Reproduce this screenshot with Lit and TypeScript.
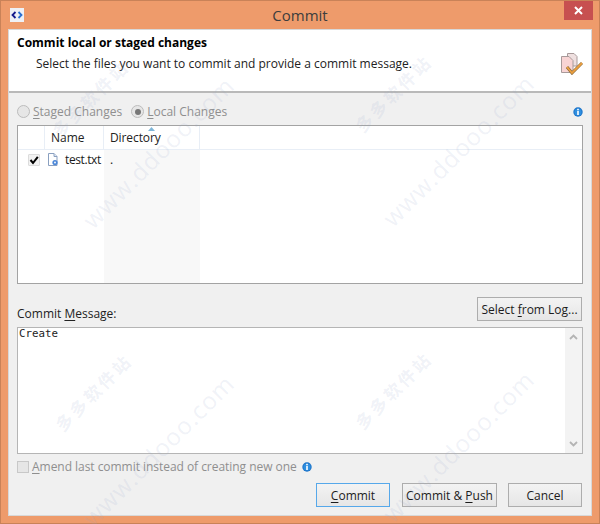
import { LitElement, html, css } from "lit";
import { customElement } from "lit/decorators.js";

const infoIcon = html`<svg class="info" viewBox="0 0 10 10"><circle cx="5" cy="5" r="4.7" fill="#1c74c9"/><circle cx="5" cy="5" r="3.6" fill="#2f8fe0"/><rect x="4.2" y="1.8" width="1.6" height="1.5" fill="#fff"/><rect x="4.2" y="4" width="1.6" height="4" fill="#fff"/></svg>`;

const marks: [string, number, number, boolean][] = [
  ["多多软件站", 90, 98, true],
  ["www.ddooo.com", 158, 152, false],
  ["多多软件站", 393, 93, true],
  ["www.ddooo.com", 458, 150, false],
  ["多多软件站", 93, 392, true],
  ["www.ddooo.com", 158, 450, false],
  ["多多软件站", 393, 390, true],
  ["www.ddooo.com", 458, 446, false],
];

@customElement("app-root")
export class AppRoot extends LitElement {
  static styles = css`
    :host {
      display: block;
      position: relative;
      width: 600px;
      height: 524px;
      overflow: hidden;
      font-family: "Open Sans", "Noto Sans", sans-serif;
      font-size: 12px;
      color: #1a1a1a;
    }
    .window {
      position: relative;
      box-sizing: border-box;
      width: 600px;
      height: 524px;
      background: #ee9b6b;
      border: 1px solid #c98258;
      display: flex;
      flex-direction: column;
      padding: 0 7px 7px;
    }
    .titlebar {
      height: 28px;
      flex: none;
      display: flex;
      align-items: center;
      justify-content: center;
      font-size: 15px;
      color: #3d3d3d;
    }
    .app-icon {
      position: absolute;
      left: 9px;
      top: 7px;
      width: 14px;
      height: 14px;
    }
    .close {
      position: absolute;
      right: 6px;
      top: 0;
      width: 29px;
      height: 19px;
      background: #c75050;
      display: flex;
      align-items: center;
      justify-content: center;
    }
    .close svg { width: 9px; height: 9px; }
    .client {
      flex: 1;
      display: flex;
      flex-direction: column;
      background: #f0f0f0;
      border: 1px solid #d8d8d8;
      min-height: 0;
    }
    .header {
      flex: none;
      box-sizing: border-box;
      height: 63px;
      background: #fff;
      border-bottom: 2px solid #b9b9b9;
      padding: 5px 8px 0;
      display: grid;
      grid-template-columns: 1fr 22px;
      grid-template-rows: 16px 24px;
      row-gap: 1px;
      column-gap: 7px;
    }
    .header h1 {
      margin: 0;
      font-size: 12px;
      font-weight: 700;
      color: #000;
      line-height: 16px;
      grid-column: 1 / 3;
    }
    .header p {
      margin: 0 0 0 19px;
      line-height: 24px;
      font-size: 12px;
      color: #222;
    }
    .header svg { width: 22px; height: 22px; margin-top: 1px; }
    .body {
      flex: 1;
      min-height: 0;
      padding: 0 8px 0;
      display: flex;
      flex-direction: column;
    }
    .mode {
      box-sizing: border-box;
      height: 32px;
      padding-top: 5px;
      flex: none;
      display: flex;
      align-items: center;
      color: #8f8f8f;
      gap: 9px;
    }
    .radio-item { display: flex; align-items: center; gap: 3px; }
    .radio {
      width: 11px;
      height: 11px;
      border: 1px solid #bcbcbc;
      border-radius: 50%;
      background: #e6e6e6;
      display: flex;
      align-items: center;
      justify-content: center;
    }
    .radio.on::after {
      content: "";
      width: 6px;
      height: 6px;
      border-radius: 50%;
      background: #777;
    }
    .spacer { flex: 1; }
    .info { width: 10px; height: 10px; flex: none; }
    .table {
      flex: none;
      box-sizing: border-box;
      height: 159px;
      background: #fff;
      border: 1px solid #a3a3a3;
      display: grid;
      grid-template-columns: 27px 59px 96px 1fr;
      grid-template-rows: 24px 1fr;
      min-width: 0;
    }
    .th {
      position: relative;
      border-right: 1px solid #e8eef6;
      border-bottom: 1px solid #e8eef6;
      line-height: 23px;
      padding-left: 6px;
      color: #222;
    }
    .th.last { border-right: 0; }
    .th.first { padding: 0; }
    .th.dir { letter-spacing: -0.1px; }
    .sort {
      position: absolute;
      left: 44px;
      top: 1px;
      width: 7px;
      height: 4px;
    }
    .cell-check { display: flex; justify-content: flex-end; padding: 4px 5px 0 0; }
    .check {
      box-sizing: border-box;
      width: 12px;
      height: 12px;
      background: #f2f2f2;
      border: 1px solid #dcdcdc;
      border-radius: 1px;
    }
    .check svg { display: block; width: 10px; height: 10px; }
    .cell-name {
      display: flex;
      align-items: flex-start;
      gap: 6px;
      padding: 3px 0 0 2px;
      line-height: 13px;
      white-space: nowrap;
      letter-spacing: -0.4px;
    }
    .cell-name svg { width: 12px; height: 13px; flex: none; }
    .cell-dir {
      background: #f8f8f8;
      padding: 0 0 0 6px;
      line-height: 20px;
    }
    .msg-head {
      flex: none;
      height: 37px;
      display: flex;
      align-items: flex-end;
      justify-content: space-between;
      padding-right: 1px;
    }
    .msg-head label { line-height: 16px; margin-bottom: -1px; color: #222; }
    .msg-head .btn { width: 105px; }
    .btn {
      box-sizing: border-box;
      height: 24px;
      border: 1px solid #adadad;
      background: linear-gradient(#f3f3f3, #e6e6e6);
      display: flex;
      align-items: center;
      justify-content: center;
      color: #1c1c1c;
      white-space: nowrap;
    }
    .btn.default { border: 1px solid #56a8ea; }
    .editor {
      margin-top: 6px;
      flex: none;
      box-sizing: border-box;
      height: 127px;
      background: #fff;
      border: 1px solid #b5b5b5;
      display: flex;
    }
    .text {
      flex: 1;
      font-family: "DejaVu Sans Mono", "Liberation Mono", monospace;
      font-size: 10.8px;
      line-height: 12px;
      padding: 0 1px;
      color: #222;
    }
    .scroll {
      width: 17px;
      background: #f3f3f3;
      display: flex;
      flex-direction: column;
      justify-content: space-between;
      align-items: center;
      padding: 6px 0;
      box-sizing: border-box;
    }
    .scroll svg { width: 9px; height: 6px; display: block; }
    .amend {
      flex: none;
      height: 23px;
      margin-top: 1px;
      display: flex;
      align-items: center;
      gap: 3px;
      color: #8f8f8f;
      letter-spacing: -0.04px;
    }
    .amend .box {
      box-sizing: border-box;
      width: 12px;
      height: 12px;
      border: 1px solid #c8c8c8;
      background: #e6e6e6;
    }
    .amend .info { margin-left: 2px; }
    .actions {
      flex: none;
      margin-top: 5px;
      display: flex;
      justify-content: flex-end;
      padding-right: 1px;
    }
    .actions .c1 { width: 74px; margin-right: 12px; }
    .actions .c2 { width: 95px; margin-right: 11px; }
    .actions .c3 { width: 74px; }
    u { text-underline-offset: 2px; }
    .mark {
      position: absolute;
      transform: translate(-50%, -50%) rotate(-45deg);
      white-space: nowrap;
      pointer-events: none;
      color: rgba(150, 165, 200, 0.15);
      font-weight: 400;
    }
    .mark.cn {
      font-family: "Noto Sans CJK SC", sans-serif;
      font-size: 17px;
      letter-spacing: 3px;
      font-weight: 700;
    }
    .mark.en {
      font-family: "Open Sans", sans-serif;
      font-size: 24px;
      letter-spacing: 1px;
    }
  `;

  render() {
    return html`
      <div class="window">
        <div class="titlebar">Commit</div>
        <svg class="app-icon" viewBox="0 0 14 14">
          <rect width="14" height="14" fill="#eef0f5"/>
          <path d="M5.5 4 L2.5 7 L5.5 10" fill="none" stroke="#141a8c" stroke-width="1.8"/>
          <path d="M8.5 4 L11.5 7 L8.5 10" fill="none" stroke="#2a6fd0" stroke-width="1.8"/>
        </svg>
        <div class="close">
          <svg viewBox="0 0 9 9"><path d="M1 1 L8 8 M8 1 L1 8" stroke="#fff" stroke-width="2"/></svg>
        </div>
        <div class="client">
          <div class="header">
            <h1>Commit local or staged changes</h1>
            <p>Select the files you want to commit and provide a commit message.</p>
            <svg viewBox="0 0 22 22">
              <path d="M6.5 0.5 H13 L16 3.5 V13 H6.5 Z" fill="#efe0e0" stroke="#a89a9a"/>
              <path d="M0.5 3.5 H8 L12 7.5 V19.5 H0.5 Z" fill="#f8d4d4" stroke="#a89a9a"/>
              <path d="M6 14 L11 20 L21 10" fill="none" stroke="#8a6a3a" stroke-width="3"/>
              <path d="M6 14 L11 20 L21 10" fill="none" stroke="#eda040" stroke-width="1.8"/>
            </svg>
          </div>
          <div class="body">
            <div class="mode">
              <span class="radio-item"><span class="radio"></span><span><u>S</u>taged Changes</span></span>
              <span class="radio-item"><span class="radio on"></span><span><u>L</u>ocal Changes</span></span>
              <span class="spacer"></span>
              ${infoIcon}
            </div>
            <div class="table">
              <div class="th first"></div>
              <div class="th">Name</div>
              <div class="th dir">Directory
                <svg class="sort" viewBox="0 0 7 4"><path d="M3.5 0 L7 4 H0 Z" fill="#7fb6d8"/></svg>
              </div>
              <div class="th last"></div>
              <div class="cell-check">
                <div class="check"><svg viewBox="0 0 10 10"><path d="M1.5 5 L4 8 L8.8 1.8" fill="none" stroke="#000" stroke-width="2"/></svg></div>
              </div>
              <div class="cell-name">
                <svg viewBox="0 0 12 13">
                  <path d="M1.5 0.5 H7 L10 3.5 V12.5 H1.5 Z" fill="#fff" stroke="#8aa0c0"/>
                  <path d="M7 0.5 V3.5 H10" fill="#dfe8f4" stroke="#8aa0c0"/>
                  <circle cx="8" cy="9.5" r="2.6" fill="#4a86d8"/>
                  <circle cx="8" cy="9.5" r="0.9" fill="#fff"/>
                </svg>
                <span>test.txt</span>
              </div>
              <div class="cell-dir">.</div>
              <div></div>
            </div>
            <div class="msg-head">
              <label>Commit <u>M</u>essage:</label>
              <div class="btn"><span>Select <u>f</u>rom Log...</span></div>
            </div>
            <div class="editor">
              <div class="text">Create</div>
              <div class="scroll">
                <svg viewBox="0 0 9 6"><path d="M1 5 L4.5 1.5 L8 5" fill="none" stroke="#b4b4b4" stroke-width="1.8"/></svg>
                <svg viewBox="0 0 9 6"><path d="M1 1 L4.5 4.5 L8 1" fill="none" stroke="#b4b4b4" stroke-width="1.8"/></svg>
              </div>
            </div>
            <div class="amend">
              <span class="box"></span>
              <span><u>A</u>mend last commit instead of creating new one</span>
              ${infoIcon}
            </div>
            <div class="actions">
              <div class="btn default c1"><span><u>C</u>ommit</span></div>
              <div class="btn c2"><span>Commit &amp; <u>P</u>ush</span></div>
              <div class="btn c3">Cancel</div>
            </div>
          </div>
        </div>
      </div>
      ${marks.map(
        ([t, x, y, cn]) =>
          html`<div class="mark ${cn ? "cn" : "en"}" style="left:${x}px;top:${y}px">${t}</div>`
      )}
    `;
  }
}
